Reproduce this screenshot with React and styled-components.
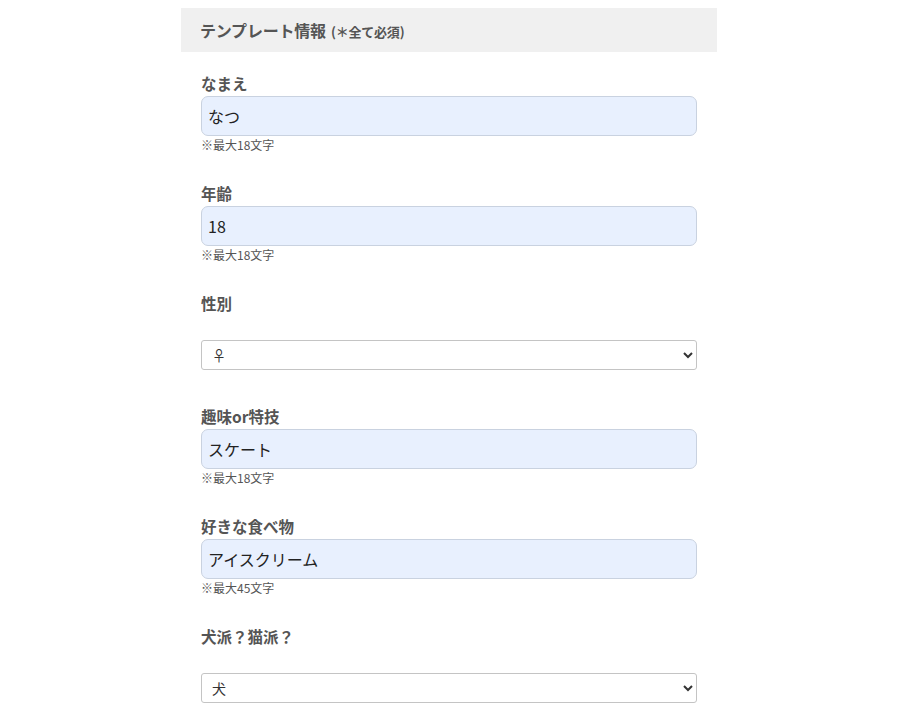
import styled, { createGlobalStyle } from 'styled-components';

const GlobalStyle = createGlobalStyle`
    body {
        margin: 0;
        background: #fff;
        font-family: "Noto Sans CJK JP", "Noto Sans", sans-serif;
        color: #555;
    }
`;

const fields = [
    { id: 'name', label: 'なまえ', type: 'text', value: 'なつ', hint: '※最大18文字' },
    { id: 'age', label: '年齢', type: 'text', value: '18', hint: '※最大18文字' },
    { id: 'sex', label: '性別', type: 'select', value: '♀', options: ['♀', '♂'] },
    { id: 'hobby', label: '趣味or特技', type: 'text', value: 'スケート', hint: '※最大18文字' },
    { id: 'food', label: '好きな食べ物', type: 'text', value: 'アイスクリーム', hint: '※最大45文字' },
    { id: 'pet', label: '犬派？猫派？', type: 'select', value: '犬', options: ['犬', '猫'] },
];

const App = () => {
    return (
        <>
            <GlobalStyle />
            <Panel>
                <Header>
                    テンプレート情報<Note>(＊全て必須)</Note>
                </Header>
                <Body>
                    {fields.map((f) => (
                        <Field key={f.id} $select={f.type === 'select'}>
                            <Label htmlFor={f.id} $select={f.type === 'select'}>{f.label}</Label>
                            {f.type === 'select' ? (
                                <Select id={f.id} defaultValue={f.value}>
                                    {f.options.map((o) => (
                                        <option key={o}>{o}</option>
                                    ))}
                                </Select>
                            ) : (
                                <>
                                    <Input id={f.id} type="text" defaultValue={f.value} />
                                    <Hint>{f.hint}</Hint>
                                </>
                            )}
                        </Field>
                    ))}
                </Body>
            </Panel>
        </>
    );
};

const Panel = styled.div`
    width: 536px;
    margin: 8px 0 0 181px;
`;

const Header = styled.div`
    height: 44px;
    background: #f0f0f0;
    padding-left: 19px;
    display: flex;
    align-items: center;
    font-size: 16px;
    font-weight: 700;
    color: #555;
    letter-spacing: -0.2px;
`;

const Note = styled.span`
    font-size: 13px;
    margin-left: 5px;
    margin-top: 2px;
`;

const Body = styled.div`
    padding: 21px 20px 0;
`;

const Field = styled.div`
    display: flex;
    flex-direction: column;
    margin-bottom: ${(p) => (p.$select ? '36px' : '31px')};
`;

const Label = styled.label`
    font-size: 15.5px;
    font-weight: 700;
    line-height: 20px;
    color: #555;
    margin-bottom: ${(p) => (p.$select ? '27px' : '3px')};
`;

const Input = styled.input`
    box-sizing: border-box;
    height: 40px;
    width: 100%;
    padding: 0 6px;
    border: 1px solid #c9d2e0;
    border-radius: 7px;
    background: #e8f0fe;
    font-family: "Noto Sans CJK JP", sans-serif;
    font-size: 16px;
    color: #222;
    outline: none;
`;

const Hint = styled.div`
    font-size: 12px;
    line-height: 14px;
    margin-top: 2px;
    color: #555;
`;

const Select = styled.select`
    box-sizing: border-box;
    height: 30px;
    width: 100%;
    padding: 0 6px;
    border: 1px solid #c4c4c4;
    border-radius: 3px;
    background: #fff;
    font-family: "Noto Sans CJK JP", sans-serif;
    font-size: 14px;
    color: #333;
`;

export default App;
